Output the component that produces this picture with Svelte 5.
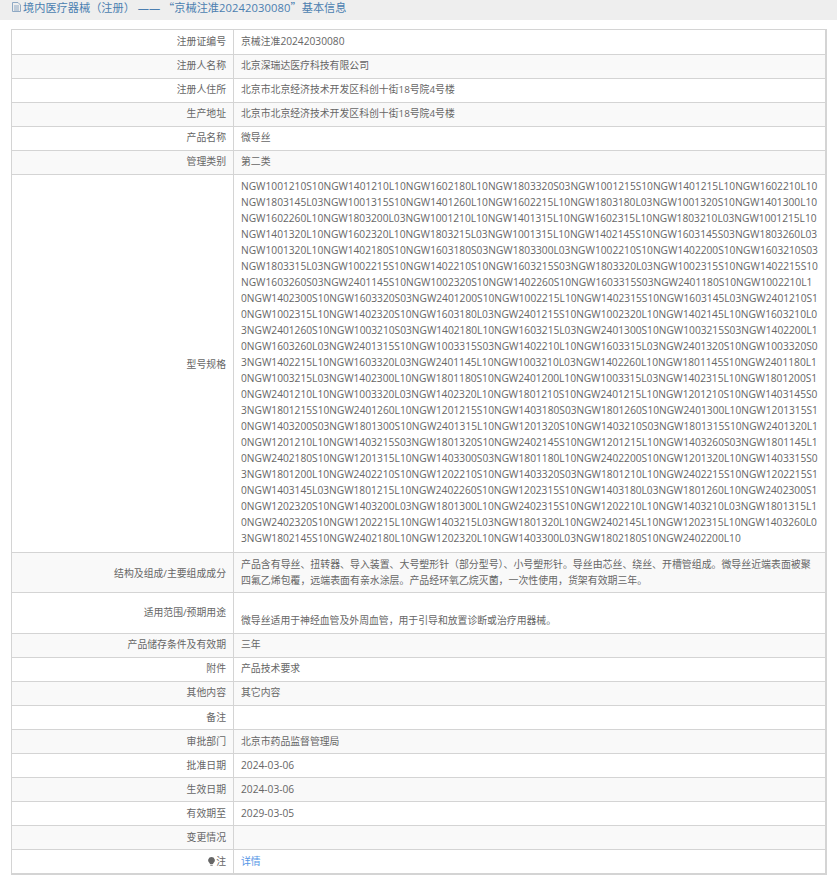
<script>
  const models = `NGW1001210S10NGW1401210L10NGW1602180L10NGW1803320S03NGW1001215S10NGW1401215L10NGW1602210L10
NGW1803145L03NGW1001315S10NGW1401260L10NGW1602215L10NGW1803180L03NGW1001320S10NGW1401300L10
NGW1602260L10NGW1803200L03NGW1001210L10NGW1401315L10NGW1602315L10NGW1803210L03NGW1001215L10
NGW1401320L10NGW1602320L10NGW1803215L03NGW1001315L10NGW1402145S10NGW1603145S03NGW1803260L03
NGW1001320L10NGW1402180S10NGW1603180S03NGW1803300L03NGW1002210S10NGW1402200S10NGW1603210S03
NGW1803315L03NGW1002215S10NGW1402210S10NGW1603215S03NGW1803320L03NGW1002315S10NGW1402215S10
NGW1603260S03NGW2401145S10NGW1002320S10NGW1402260S10NGW1603315S03NGW2401180S10NGW1002210L1
0NGW1402300S10NGW1603320S03NGW2401200S10NGW1002215L10NGW1402315S10NGW1603145L03NGW2401210S1
0NGW1002315L10NGW1402320S10NGW1603180L03NGW2401215S10NGW1002320L10NGW1402145L10NGW1603210L0
3NGW2401260S10NGW1003210S03NGW1402180L10NGW1603215L03NGW2401300S10NGW1003215S03NGW1402200L1
0NGW1603260L03NGW2401315S10NGW1003315S03NGW1402210L10NGW1603315L03NGW2401320S10NGW1003320S0
3NGW1402215L10NGW1603320L03NGW2401145L10NGW1003210L03NGW1402260L10NGW1801145S10NGW2401180L1
0NGW1003215L03NGW1402300L10NGW1801180S10NGW2401200L10NGW1003315L03NGW1402315L10NGW1801200S1
0NGW2401210L10NGW1003320L03NGW1402320L10NGW1801210S10NGW2401215L10NGW1201210S10NGW1403145S0
3NGW1801215S10NGW2401260L10NGW1201215S10NGW1403180S03NGW1801260S10NGW2401300L10NGW1201315S1
0NGW1403200S03NGW1801300S10NGW2401315L10NGW1201320S10NGW1403210S03NGW1801315S10NGW2401320L1
0NGW1201210L10NGW1403215S03NGW1801320S10NGW2402145S10NGW1201215L10NGW1403260S03NGW1801145L1
0NGW2402180S10NGW1201315L10NGW1403300S03NGW1801180L10NGW2402200S10NGW1201320L10NGW1403315S0
3NGW1801200L10NGW2402210S10NGW1202210S10NGW1403320S03NGW1801210L10NGW2402215S10NGW1202215S1
0NGW1403145L03NGW1801215L10NGW2402260S10NGW1202315S10NGW1403180L03NGW1801260L10NGW2402300S1
0NGW1202320S10NGW1403200L03NGW1801300L10NGW2402315S10NGW1202210L10NGW1403210L03NGW1801315L1
0NGW2402320S10NGW1202215L10NGW1403215L03NGW1801320L10NGW2402145L10NGW1202315L10NGW1403260L0
3NGW1802145S10NGW2402180L10NGW1202320L10NGW1403300L03NGW1802180S10NGW2402200L10`.split('\n');

  const top = [
    ['注册人名称', '北京深瑞达医疗科技有限公司'],
    ['注册人住所', '北京市北京经济技术开发区科创十街18号院4号楼'],
    ['生产地址', '北京市北京经济技术开发区科创十街18号院4号楼'],
    ['产品名称', '微导丝'],
    ['管理类别', '第二类']
  ];
  const bottom = [
    ['产品储存条件及有效期', '三年'],
    ['附件', '产品技术要求'],
    ['其他内容', '其它内容'],
    ['备注', ''],
    ['审批部门', '北京市药品监督管理局'],
    ['批准日期', '2024-03-06'],
    ['生效日期', '2024-03-06'],
    ['有效期至', '2029-03-05'],
    ['变更情况', '']
  ];
</script>

<div class="head">
  <svg class="doc" width="9" height="10" viewBox="0 0 9 10" aria-hidden="true">
    <path d="M.5.5h5.5l2.5 2.5v6.5h-8z M2 4h5 M2 6h5 M2 8h5" fill="none" stroke="#8fa9c4" stroke-width="1"/>
  </svg>
  <span>境内医疗器械（注册） —— <span class="q">“</span>京械注准<span class="hnum">20242030080</span><span class="q">”</span>基本信息</span>
</div>

<div class="wrap">
  <table>
    <colgroup><col class="c1" /><col /></colgroup>
    <tbody>
      <tr class="first"><th>注册证编号</th><td>京械注准<span class="num">20242030080</span></td></tr>
      {#each top as [k, v]}
        <tr><th>{k}</th><td>{v}</td></tr>
      {/each}
      <tr class="long">
        <th>型号规格</th>
        <td>{#each models as line}<span class="ln">{line}</span>{/each}</td>
      </tr>
      <tr class="multi">
        <th>结构及组成/主要组成成分</th>
        <td>产品含有导丝、扭转器、导入装置、大号塑形针（部分型号）、小号塑形针。导丝由芯丝、绕丝、开槽管组成。微导丝近端表面被聚四氟乙烯包覆，远端表面有亲水涂层。产品经环氧乙烷灭菌，一次性使用，货架有效期三年。</td>
      </tr>
      <tr class="use">
        <th>适用范围/预期用途</th>
        <td><br />微导丝适用于神经血管及外周血管，用于引导和放置诊断或治疗用器械。</td>
      </tr>
      {#each bottom as [k, v], i}
        <tr class:low={i >= 3}><th>{k}</th><td class:num={/^\d/.test(v)}>{v}</td></tr>
      {/each}
      <tr class="low">
        <th>
          <svg class="bulb" width="7" height="9" viewBox="0 0 7 9" aria-hidden="true">
            <path d="M3.5 0a3.4 3.4 0 0 1 2 6.1L5 7H2l-.5-.9A3.4 3.4 0 0 1 3.5 0z" fill="#666"/>
            <path d="M2.3 7.6h2.4V9H2.3z" fill="#999"/>
          </svg>注
        </th>
        <td><span class="link">详情</span></td>
      </tr>
    </tbody>
  </table>
</div>

<style>
  :global(body) {
    margin: 0;
    background: #fff;
  }
  .head {
    height: 20px;
    background: #eeeeee;
    display: flex;
    align-items: flex-start;
    gap: 2px;
    padding-left: 12px;
    margin-bottom: 9px;
    font: 11.2px/14px "Open Sans", "Noto Sans CJK SC", sans-serif;
    color: #4b7eb0;
    white-space: pre;
  }
  .doc {
    flex: none;
    margin-top: 2px;
  }
  .q {
    font-family: "Noto Sans CJK SC", sans-serif;
  }
  .hnum {
    letter-spacing: 0.1px;
  }
  .wrap {
    padding: 0 10px 0 11px;
  }
  table {
    width: 816px;
    table-layout: fixed;
    border-collapse: collapse;
    border: 1px solid #d4d4d4;
    border-bottom-width: 2px;
    border-right-width: 2px;
    font: 9.85px/16px "Open Sans", "Noto Sans CJK SC", sans-serif;
    color: #666;
  }
  .c1 {
    width: 222px;
  }
  th, td {
    border: 1px solid #d4d4d4;
    padding: 2px 7px 5px 7px;
    height: 16px;
    font-weight: normal;
    vertical-align: middle;
  }
  th {
    text-align: right;
  }
  tr:nth-child(even) th, tr:nth-child(even) td {
    background: #f9f9f9;
  }
  .first th, .first td {
    padding-top: 3px;
    padding-bottom: 5px;
  }
  .low th, .low td {
    padding-top: 3px;
    padding-bottom: 4px;
  }
  .num {
    font-size: 10.2px;
  }
  .long td {
    font-size: 10.2px;
    padding-top: 3px;
    padding-bottom: 6px;
    white-space: nowrap;
  }
  .long th, .multi th, .use th {
    padding-top: 4px;
    padding-bottom: 3px;
  }
  .ln {
    display: block;
  }
  .multi td {
    font-size: 9.92px;
    padding: 3px 14px 4px 7px;
  }
  .use td {
    padding-top: 3px;
    padding-bottom: 5px;
  }
  .use th {
    padding-top: 2px;
    padding-bottom: 5px;
  }
  .bulb {
    vertical-align: -1px;
    margin-right: 1px;
  }
  .link {
    color: #5596e6;
  }
</style>
